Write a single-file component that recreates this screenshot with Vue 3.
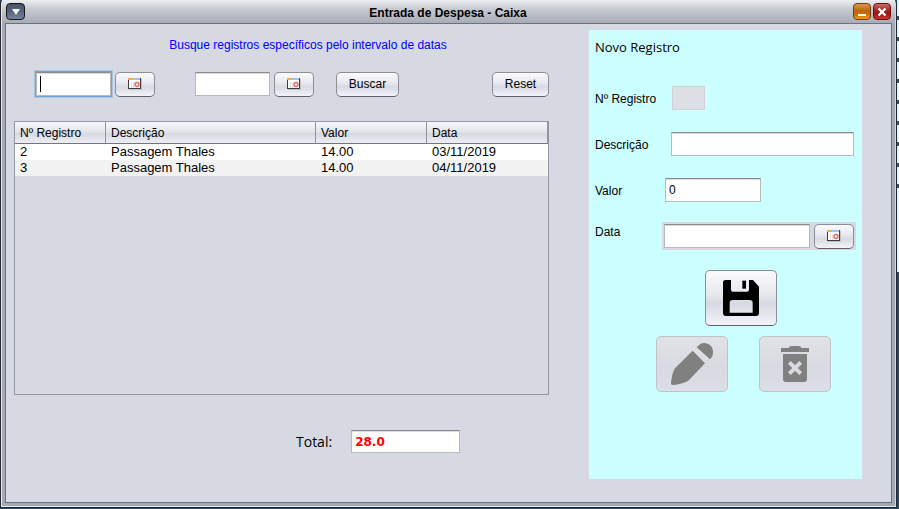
<script setup>
import { ref, computed } from 'vue'

const columns = ['Nº Registro', 'Descrição', 'Valor', 'Data']
const rows = ref([
  { id: 2, description: 'Passagem Thales', value: 14, date: '03/11/2019' },
  { id: 3, description: 'Passagem Thales', value: 14, date: '04/11/2019' },
])
const startDate = ref('')
const endDate = ref('')
const form = ref({ id: '', description: '', value: '0', date: '' })
const total = computed(() => rows.value.reduce((sum, r) => sum + r.value, 0).toFixed(1))
</script>

<template>
  <div class="desktop">
    <main class="window">
      <header class="titlebar">
        <button class="sys menu" type="button" aria-label="Menu">
          <svg width="8" height="6" viewBox="0 0 8 6"><path d="M0 0H8L4 6Z" fill="#fff" /></svg>
        </button>
        <h1>Entrada de Despesa - Caixa</h1>
        <button class="sys minimize" type="button" aria-label="Minimizar">
          <svg width="10" height="12" viewBox="0 0 10 12"><path d="M1 8H9V10H1Z" fill="#fff" /></svg>
        </button>
        <button class="sys close" type="button" aria-label="Fechar">
          <svg width="10" height="10" viewBox="0 0 10 10"><path d="M1.5 1.5L8.5 8.5M8.5 1.5L1.5 8.5" stroke="#fff" stroke-width="2.4" /></svg>
        </button>
      </header>

      <div class="content">
        <section class="records">
          <p class="hint">Busque registros específicos pelo intervalo de datas</p>
          <form class="search" @submit.prevent>
            <span class="focused">
              <input v-model="startDate" class="field" type="text" aria-label="Data inicial" />
              <i class="caret"></i>
            </span>
            <button class="btn cal" type="button" aria-label="Escolher data inicial">
              <svg class="cal-icon" width="14" height="12" viewBox="0 0 14 12"><use href="#calendar" /></svg>
            </button>
            <input v-model="endDate" class="field end" type="text" aria-label="Data final" />
            <button class="btn cal" type="button" aria-label="Escolher data final">
              <svg class="cal-icon" width="14" height="12" viewBox="0 0 14 12"><use href="#calendar" /></svg>
            </button>
            <button class="btn find" type="submit">Buscar</button>
            <button class="btn reset" type="reset">Reset</button>
          </form>

          <div class="table-box">
            <table>
              <colgroup><col class="c1" /><col class="c2" /><col class="c3" /><col class="c4" /></colgroup>
              <thead>
                <tr><th v-for="c in columns" :key="c" scope="col">{{ c }}</th></tr>
              </thead>
              <tbody>
                <tr v-for="r in rows" :key="r.id">
                  <td>{{ r.id }}</td>
                  <td>{{ r.description }}</td>
                  <td>{{ r.value.toFixed(2) }}</td>
                  <td>{{ r.date }}</td>
                </tr>
              </tbody>
            </table>
          </div>

          <div class="total">
            <label for="total">Total:</label>
            <input id="total" class="field" type="text" :value="total" readonly />
          </div>
        </section>

        <form class="entry" @submit.prevent>
          <h2>Novo Registro</h2>
          <div class="row reg">
            <label for="reg">Nº Registro</label>
            <input id="reg" v-model="form.id" class="field" type="text" disabled />
          </div>
          <div class="row desc">
            <label for="desc">Descrição</label>
            <input id="desc" v-model="form.description" class="field" type="text" />
          </div>
          <div class="row value">
            <label for="value">Valor</label>
            <input id="value" v-model="form.value" class="field" type="text" />
          </div>
          <div class="row date">
            <label for="date">Data</label>
            <span class="picker">
              <input id="date" v-model="form.date" class="field" type="text" />
              <button class="btn cal" type="button" aria-label="Escolher data">
                <svg class="cal-icon" width="14" height="12" viewBox="0 0 14 12"><use href="#calendar" /></svg>
              </button>
            </span>
          </div>
          <div class="actions save">
            <button class="btn tool" type="submit" aria-label="Salvar">
              <svg width="36" height="36" viewBox="0 0 108 108">
                <path fill-rule="evenodd" d="M7 0H24V29Q24 35 30 35H72Q78 35 78 29V0H90L108 20V99Q108 108 99 108H9Q0 108 0 99V8Q0 0 7 0ZM20 98H89V68Q89 60 80 60H29Q20 60 20 68Z" />
                <path d="M58 2H69V26H58Z" />
              </svg>
            </button>
          </div>
          <div class="actions">
            <button class="btn tool" type="button" aria-label="Editar" disabled>
              <svg width="42" height="42" viewBox="0 0 126 126" fill="#808080">
                <path d="M77 13C85 4 92 0 99 0C114 0 126 12 126 26C126 36 124 42 117 49Z" />
                <path d="M65 23L102 61L52 113C38 121 18 125 4 126Q0 126 0 121C1 105 5 87 12 76Z" />
              </svg>
            </button>
            <button class="btn tool" type="button" aria-label="Excluir" disabled>
              <svg width="28" height="36" viewBox="0 0 84 108">
                <path fill="#808080" d="M0 6H22Q26 0 32 0H53Q59 0 62 6H84V18H0ZM6 24H78V99Q78 108 69 108H15Q6 108 6 99Z" />
                <path d="M25 49L59 83M59 49L25 83" stroke="#dadbe1" stroke-width="12" />
              </svg>
            </button>
          </div>
        </form>
      </div>
    </main>
    <aside class="backdrop" aria-hidden="true"><i class="paper"></i></aside>

    <svg class="defs" width="0" height="0" aria-hidden="true">
      <symbol id="calendar" viewBox="0 0 14 12">
        <path d="M1 1H14V12H1Z" fill="#c5c2c2" />
        <path d="M0 0H13V11H0Z" fill="#3e3c40" />
        <path d="M1 2H12V10H1Z" fill="#fafafa" />
        <path d="M0 0H5V2H0Z" fill="#f3b136" />
        <path d="M5 0H12V2H5Z" fill="#9fc3f3" />
        <path d="M3.5 4V10M5.5 4V10" stroke="#ddd" stroke-width="1" />
        <circle cx="9" cy="6.5" r="2" fill="#fff" stroke="#e8605f" stroke-width="1.3" />
      </symbol>
    </svg>
  </div>
</template>

<style>
body {
  margin: 0;
}
</style>

<style scoped>
* {
  box-sizing: border-box;
}
.desktop {
  display: flex;
  min-height: 100vh;
  padding-bottom: 1px;
  background: #214c69;
  font: 12px/16px "Liberation Sans", Arial, sans-serif;
  color: #000;
}
.window {
  flex: 1;
  display: flex;
  flex-direction: column;
  padding: 0 4px 4px;
  border: solid #25262c;
  border-width: 0 1px 1px;
  border-radius: 4px 4px 0 0;
  background: #a4a9b5;
  box-shadow: inset 1px -1px #e9ebef, inset -1px 0 #d3d6dd;
}
.titlebar {
  display: flex;
  align-items: center;
  gap: 2px;
  height: 23px;
  margin: 0 -3px;
  padding: 0 4px;
  background: linear-gradient(#eceef0, #c6c9d0 40%, #a8acb6);
}
h1 {
  flex: 1;
  margin: 0;
  padding: 2px 0 0 18px;
  font-size: 12px;
  line-height: 20px;
  text-align: center;
}
.sys {
  display: flex;
  align-items: center;
  justify-content: center;
  width: 18px;
  height: 17px;
  padding: 0;
  border: 1px solid #14161c;
  border-radius: 4px;
}
.menu {
  width: 19px;
  background: linear-gradient(#4a5468, #59647a 50%, #76839b);
}
.minimize {
  border-color: #7c3a00;
  background: linear-gradient(#d79a55, #c06408 45%, #cc6f08 70%, #f09a25);
}
.close {
  border-color: #6d0b0b;
  background: linear-gradient(#c46e6c, #a01c1a 50%, #a51514 70%, #ce3b32);
}
.content {
  flex: 1;
  display: grid;
  grid-template-columns: 1fr 273px;
  column-gap: 40px;
  padding: 6px 29px 23px 8px;
  border: 1px solid #6c717e;
  background: #d6d9e1;
}
.records {
  display: flex;
  flex-direction: column;
}
.hint {
  margin: 0;
  padding: 7px 0 0 53px;
  text-align: center;
  color: #00f;
}
.search {
  display: flex;
  align-items: center;
  height: 24px;
  margin: 19px 0 25px;
  padding-left: 22px;
}
.field {
  width: 75px;
  min-width: 0;
  height: 24px;
  padding: 0 3px;
  border: 1px solid #b8b9bd;
  border-top-color: #8b8b8e;
  border-radius: 0;
  outline: none;
  background: #fff;
  box-shadow: inset 0 1px #dcdcdc;
  font: inherit;
  color: #000;
}
.focused {
  position: relative;
  display: flex;
  margin-right: 4px;
}
.focused .field {
  box-shadow: inset 0 1px #dcdcdc, 0 0 0 1px #73a4d1, 0 0 0 2px #a9c4dd;
}
.caret {
  position: absolute;
  left: 4px;
  top: 4px;
  width: 1px;
  height: 16px;
  background: #000;
}
.btn {
  display: flex;
  align-items: center;
  justify-content: center;
  height: 25px;
  padding: 0;
  border: 1px solid #8b8e95;
  border-bottom-color: #5c6068;
  border-radius: 5px;
  background: linear-gradient(#fafafc, #e7e8ed 45%, #d6d9e1 60%, #f2f4fa);
  font: inherit;
  color: #000;
}
.cal {
  width: 40px;
}
.end {
  margin: 0 4px 0 40px;
}
.find {
  width: 63px;
  margin-left: 22px;
}
.reset {
  width: 57px;
  margin-left: auto;
}
.table-box {
  flex: 1;
  border: 1px solid #9297a1;
}
table {
  width: 100%;
  border-collapse: separate;
  border-spacing: 0;
  table-layout: fixed;
}
.c1 { width: 91px; }
.c3 { width: 111px; }
.c4 { width: 121px; }
th {
  height: 22px;
  padding: 0 5px;
  border-right: 1px solid #8e939e;
  border-bottom: 1px solid #707580;
  background: linear-gradient(#f7f8fa, #e2e4e9 48%, #d6d9e0 55%, #eceef3);
  font-weight: 400;
  text-align: left;
}
td {
  height: 16px;
  padding: 0 5px;
  font-size: 13px;
  line-height: 16px;
}
tbody tr {
  background: #fff;
}
tbody tr:nth-child(even) {
  background: #f2f2f2;
}
.total {
  display: flex;
  align-items: center;
  gap: 19px;
  padding: 35px 0 26px 282px;
  font: 14px/20px "Open Sans", sans-serif;
}
.total .field {
  width: 109px;
  height: 23px;
  font: bold 12px/16px "DejaVu Sans", sans-serif;
  color: #f00;
}
.entry {
  padding: 7px 6px 20px;
  background: #cff;
}
h2 {
  margin: 0 0 29px;
  font: 13px/20px "Open Sans", sans-serif;
}
.row {
  display: flex;
  align-items: center;
  margin-bottom: 22px;
}
.row label {
  flex: none;
  width: 70px;
  padding-top: 2px;
}
.reg label {
  width: 77px;
}
.desc label {
  width: 76px;
}
.reg .field {
  width: 33px;
  border-color: #cfd1d6;
  background: #dcdfe4;
  box-shadow: none;
}
.desc .field {
  flex: 1;
  margin-right: 2px;
}
.value {
  margin-bottom: 20px;
}
.value .field {
  width: 96px;
}
.date {
  align-items: flex-start;
  margin-bottom: 20px;
}
.date label {
  width: 67px;
}
.picker {
  flex: 1;
  display: flex;
  align-items: center;
  gap: 4px;
  height: 28px;
  padding: 0 2px;
  background: #d6d9e1;
}
.picker .field {
  flex: 1;
}
.actions {
  display: flex;
  justify-content: center;
  gap: 31px;
  padding-left: 36px;
}
.save {
  padding: 0 0 10px 30px;
}
.tool {
  width: 72px;
  height: 56px;
}
.tool:disabled {
  border-color: #bfc3cb;
  background: linear-gradient(#e0e2e7, #d8dae1 60%, #dcdfe6);
}
.backdrop {
  width: 2px;
}
.paper {
  display: block;
  height: 272px;
  background: linear-gradient(#cff, #cff) 0 188px no-repeat, repeating-linear-gradient(#cff 0 16px, #26555f 16px 20px, #cff 20px 21px);
}
.defs {
  position: absolute;
}
</style>
